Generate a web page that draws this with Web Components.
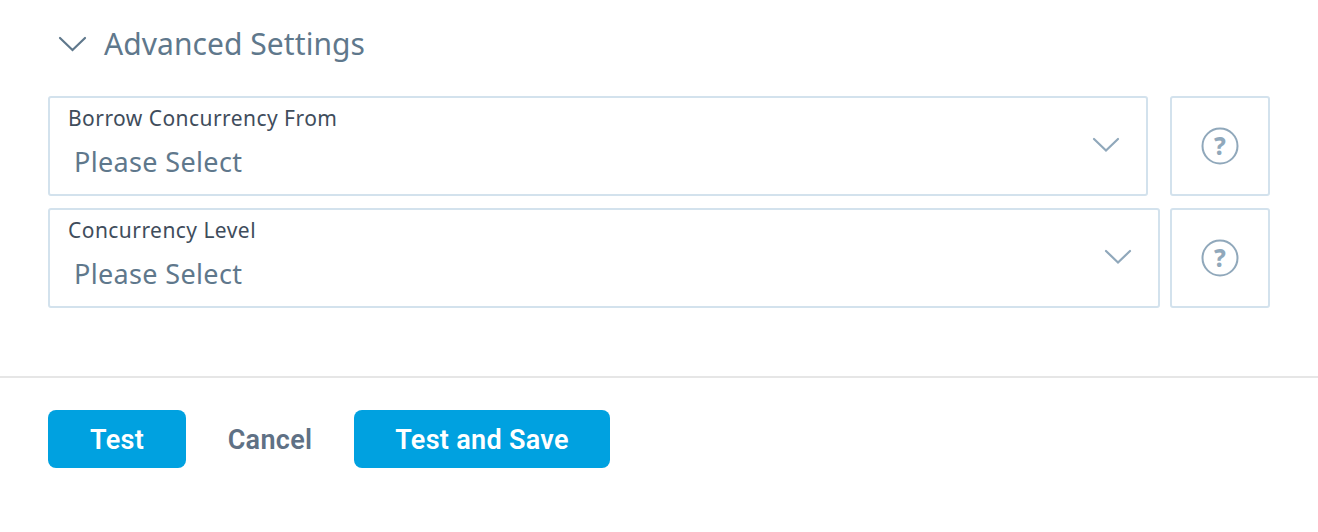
<!DOCTYPE html>
<html>
<head>
<meta charset="utf-8">
<style>
    html, body { margin: 0; background: #fff; }
    body { font-family: "Noto Sans", sans-serif; height: 532px; overflow: hidden; }
</style>
</head>
<body>
<settings-panel>
    <select-row label="Borrow Concurrency From" gap="22"></select-row>
    <select-row label="Concurrency Level" gap="10"></select-row>
</settings-panel>
<form-footer></form-footer>

<script>
const panelTemplate = document.createElement("template")
panelTemplate.innerHTML = /*html*/`
<style>
    :host {
        display: block;
        padding: 23px 48px 0;
        height: 376px;
        box-sizing: border-box;
    }
    #title {
        display: flex;
        align-items: center;
        height: 40px;
        margin-bottom: 33px;
        padding-left: 10px;
        color: #5f788c;
        font-size: 30px;
        letter-spacing: 0.06px;
    }
    svg { margin-right: 17px; margin-top: 2px; }
    #rows { display: flex; flex-direction: column; gap: 12px; }
</style>
<div id="title">
    <svg width="29" height="16" viewBox="0 0 29 16" fill="none" stroke="#5f788c" stroke-width="2.2" stroke-linecap="round"><path d="M2 2 L14.500 14 L27 2"/></svg>
    <span>Advanced Settings</span>
</div>
<div id="rows"><slot></slot></div>
`;

class SettingsPanel extends HTMLElement {
    constructor(){
        super();
        this.shadow = this.attachShadow({mode: "open"})
        this.shadow.append(panelTemplate.content.cloneNode(true))
    }
}
customElements.define("settings-panel", SettingsPanel);

const rowTemplate = document.createElement("template")
rowTemplate.innerHTML = /*html*/`
<style>
    :host { display: flex; height: 100px; }
    .box {
        border: 2px solid #d3e2ed;
        border-radius: 3px;
        box-sizing: border-box;
        height: 100%;
    }
    #select {
        flex: 1;
        display: flex;
        justify-content: space-between;
    }
    #label {
        padding: 7px 0 0 18px;
        color: #3f4d5c;
        font-size: 21px;
        line-height: 27px;
        letter-spacing: 0.45px;
    }
    #value {
        padding: 12px 0 0 24px;
        color: #5f788c;
        font-size: 27px;
        line-height: 36px;
        letter-spacing: 0.35px;
    }
    #arrow { margin: 39px 26px 0 0; }
    #help {
        width: 100px;
        flex: none;
        display: flex;
        align-items: center;
        justify-content: center;
    }
</style>
<div class="box" id="select">
    <div>
        <div id="label"></div>
        <div id="value">Please Select</div>
    </div>
    <svg id="arrow" width="28" height="16" viewBox="0 0 28 16" fill="none" stroke="#90a8bb" stroke-width="2.200" stroke-linecap="round"><path d="M2 2 L14 13.500 L26 2"/></svg>
</div>
<div class="box" id="help">
    <svg width="38" height="38" viewBox="0 0 38 38">
        <circle cx="19" cy="19" r="17.500" fill="none" stroke="#90a8bb" stroke-width="2"/>
        <text x="19" y="27.500" text-anchor="middle" font-family="'Noto Sans', sans-serif" font-weight="800" font-size="24" fill="#90a8bb">?</text>
    </svg>
</div>
`;

class SelectRow extends HTMLElement {
    constructor(){
        super();
        this.shadow = this.attachShadow({mode: "open"})
        this.shadow.append(rowTemplate.content.cloneNode(true))
    }
    connectedCallback(){
        this.shadow.getElementById("label").textContent = this.getAttribute("label")
        this.shadow.getElementById("select").style.marginRight = this.getAttribute("gap") + "px"
    }
}
customElements.define("select-row", SelectRow);

const footerTemplate = document.createElement("template")
footerTemplate.innerHTML = /*html*/`
<style>
    :host {
        display: flex;
        align-items: center;
        border-top: 2px solid #e6e6e6;
        padding: 32px 48px 0;
        font-family: Roboto, sans-serif;
        font-size: 27px;
        font-weight: 600;
    }
    button {
        height: 58px;
        border: none;
        border-radius: 8px;
        padding: 1px 0 0;
        background-color: #00a1e0;
        color: #fff;
        font: inherit;
        letter-spacing: 0.3px;
    }
    #test { width: 138px; }
    #save { width: 256px; }
    #cancel {
        width: 168px;
        background: none;
        color: #5f7185;
    }
</style>
<button id="test">Test</button>
<button id="cancel">Cancel</button>
<button id="save">Test and Save</button>
`;

class FormFooter extends HTMLElement {
    constructor(){
        super();
        this.shadow = this.attachShadow({mode: "open"})
        this.shadow.append(footerTemplate.content.cloneNode(true))
    }
}
customElements.define("form-footer", FormFooter);
</script>
</body>
</html>
